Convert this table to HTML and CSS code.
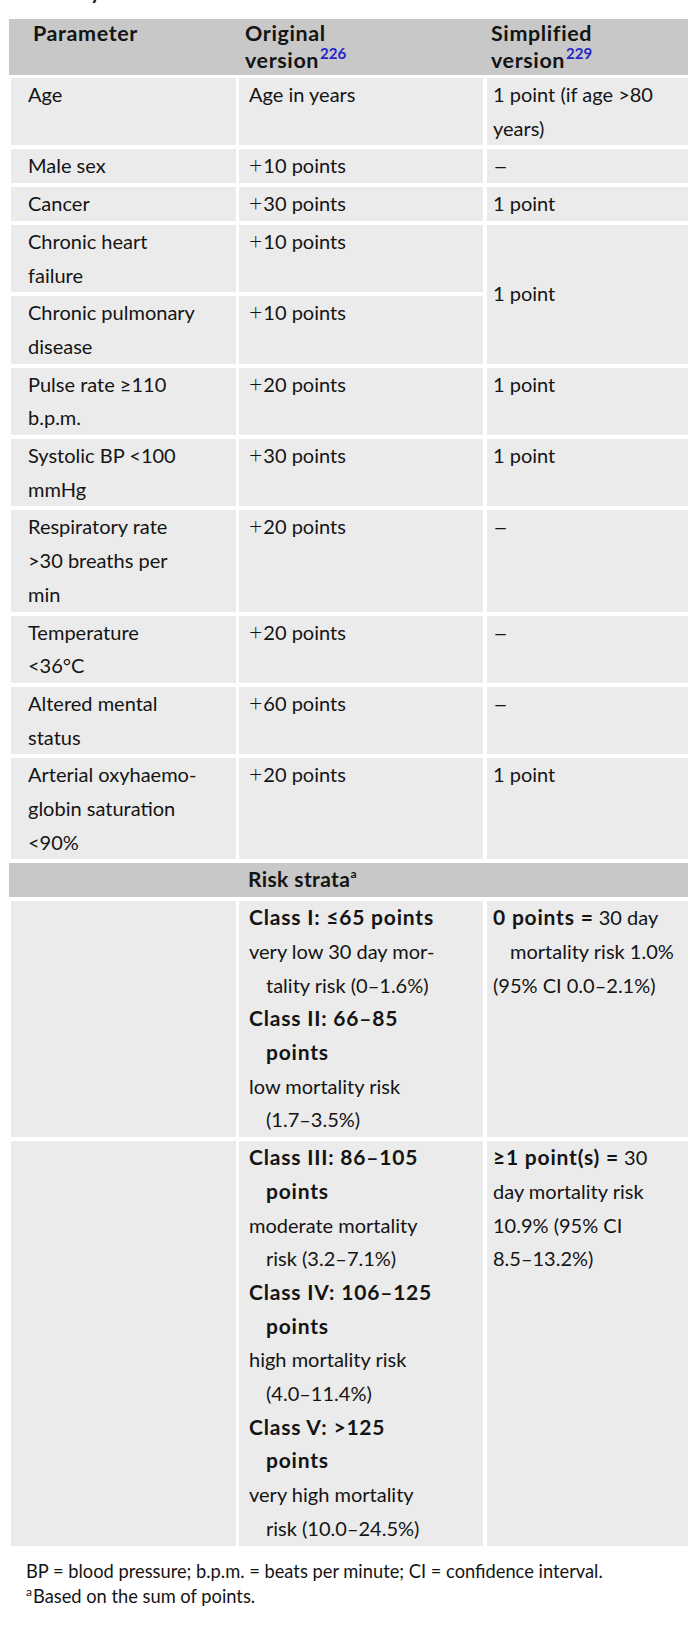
FILE: index.html
```html
<!DOCTYPE html>
<html lang="en">
<head>
<meta charset="utf-8">
<title>PESI</title>
<link rel="stylesheet" href="styles.css">
</head>
<body>
<div class="page">
  <div class="caption">Severity Index</div>
  <table class="pesi">
    <colgroup>
      <col class="w1"><col class="w2"><col class="w3">
    </colgroup>
    <thead>
      <tr>
        <th class="c1">Parameter</th>
        <th class="c2">Original<br>version<sup class="ref">226</sup></th>
        <th class="c3">Simplified<br>version<sup class="ref">229</sup></th>
      </tr>
    </thead>
    <tbody>
      <tr class="first">
        <td class="c1">Age</td>
        <td class="c2">Age in years</td>
        <td class="c3">1 point (if age &gt;80<br>years)</td>
      </tr>
      <tr>
        <td class="c1">Male sex</td>
        <td class="c2"><span class="op">+</span>10 points</td>
        <td class="c3"><span class="dash">–</span></td>
      </tr>
      <tr>
        <td class="c1">Cancer</td>
        <td class="c2"><span class="op">+</span>30 points</td>
        <td class="c3">1 point</td>
      </tr>
      <tr>
        <td class="c1">Chronic heart<br>failure</td>
        <td class="c2"><span class="op">+</span>10 points</td>
        <td class="c3 mid" rowspan="2">1 point</td>
      </tr>
      <tr>
        <td class="c1">Chronic pulmonary<br>disease</td>
        <td class="c2"><span class="op">+</span>10 points</td>
      </tr>
      <tr>
        <td class="c1">Pulse rate ≥110<br>b.p.m.</td>
        <td class="c2"><span class="op">+</span>20 points</td>
        <td class="c3">1 point</td>
      </tr>
      <tr>
        <td class="c1">Systolic BP &lt;100<br>mmHg</td>
        <td class="c2"><span class="op">+</span>30 points</td>
        <td class="c3">1 point</td>
      </tr>
      <tr>
        <td class="c1">Respiratory rate<br>&gt;30 breaths per<br>min</td>
        <td class="c2"><span class="op">+</span>20 points</td>
        <td class="c3"><span class="dash">–</span></td>
      </tr>
      <tr>
        <td class="c1">Temperature<br>&lt;36°C</td>
        <td class="c2"><span class="op">+</span>20 points</td>
        <td class="c3"><span class="dash">–</span></td>
      </tr>
      <tr>
        <td class="c1">Altered mental<br>status</td>
        <td class="c2"><span class="op">+</span>60 points</td>
        <td class="c3"><span class="dash">–</span></td>
      </tr>
      <tr>
        <td class="c1">Arterial oxyhaemo-<br>globin saturation<br>&lt;90%</td>
        <td class="c2"><span class="op">+</span>20 points</td>
        <td class="c3">1 point</td>
      </tr>
      <tr class="band">
        <td class="c1"></td>
        <td class="c2"><b>Risk strata</b><sup class="fn">a</sup></td>
        <td class="c3"></td>
      </tr>
      <tr>
        <td class="c1"></td>
        <td class="c2">
          <p class="hang"><b>Class I: ≤65 points</b></p>
          <p class="hang">very low 30 day mor-<br>tality risk (0–1.6%)</p>
          <p class="hang"><b>Class II: 66–85<br>points</b></p>
          <p class="hang">low mortality risk<br>(1.7–3.5%)</p>
        </td>
        <td class="c3">
          <p class="hang"><b>0 points =</b> 30 day<br>mortality risk 1.0%</p>
          <p>(95% CI 0.0–2.1%)</p>
        </td>
      </tr>
      <tr>
        <td class="c1"></td>
        <td class="c2">
          <p class="hang"><b>Class III: 86–105<br>points</b></p>
          <p class="hang">moderate mortality<br>risk (3.2–7.1%)</p>
          <p class="hang"><b>Class IV: 106–125<br>points</b></p>
          <p class="hang">high mortality risk<br>(4.0–11.4%)</p>
          <p class="hang"><b>Class V: &gt;125<br>points</b></p>
          <p class="hang">very high mortality<br>risk (10.0–24.5%)</p>
        </td>
        <td class="c3">
          <p><b>≥1 point(s) =</b> 30<br>day mortality risk<br>10.9% (95% CI<br>8.5–13.2%)</p>
        </td>
      </tr>
    </tbody>
  </table>
  <div class="notes">
    <p>BP = blood pressure; b.p.m. = beats per minute; CI = confidence interval.</p>
    <p><sup class="fn">a</sup>Based on the sum of points.</p>
  </div>
</div>
</body>
</html>
```
FILE: styles.css
```css
html, body {
  margin: 0;
  padding: 0;
  background: #ffffff;
  overflow: hidden;
}

body {
  font-family: Lato, "Liberation Sans", sans-serif;
  color: #141414;
}

.page {
  width: 720px;
  padding-left: 9px;
}

.caption {
  font-weight: 700;
  font-size: 20px;
  line-height: 24px;
  margin: -21px 0 16px 19px;
  white-space: nowrap;
}

.pesi {
  border-collapse: separate;
  border-spacing: 0;
  table-layout: fixed;
  width: 711px;
  font-size: 20px;
}

.w1 { width: 227px; }
.w2 { width: 247px; }
.w3 { width: 237px; }

.pesi th {
  background: #c8c8c8;
  font-weight: 700;
  font-size: 21.5px;
  letter-spacing: 0.6px;
  text-align: left;
  vertical-align: top;
  line-height: 27px;
  padding: 1px 0 1px;
  white-space: nowrap;
}

.pesi th.c1 { padding-left: 24px; }
.pesi th.c2 { padding-left: 9px; }
.pesi th.c3 { padding-left: 8px; }

.pesi td {
  background: #ebebeb;
  border-top: 4px solid #ffffff;
  line-height: 33.7px;
  padding: 0;
  vertical-align: top;
  white-space: nowrap;
}

.pesi tr.first td { border-top-width: 3px; }

.pesi td.c1 { border-left: 2px solid #ffffff; padding-left: 17px; }
.pesi td.c2 { border-left: 3px solid #ffffff; padding-left: 10px; }
.pesi td.c3 { border-left: 4px solid #ffffff; padding-left: 6px; }

.pesi td.mid { vertical-align: middle; }

.op {
  font-size: 23px;
  font-weight: 300;
  line-height: 20px;
  margin-right: 1px;
}

.dash {
  display: inline-block;
  transform: scaleX(1.3);
  transform-origin: left center;
}

.pesi b {
  font-size: 21px;
  letter-spacing: 0.8px;
  line-height: 20px;
}

.pesi tr.band td {
  background: #c8c8c8;
  border-left: 0;
}
.pesi tr.band td.c2 { padding-left: 12px; }
.pesi tr.band b { letter-spacing: 0.4px; }

.pesi p {
  margin: 0;
}

.pesi p.hang {
  padding-left: 17px;
  text-indent: -17px;
}

sup.ref {
  color: #2626c8;
  font-weight: 700;
  font-size: 15px;
  letter-spacing: 0;
  line-height: 0;
  vertical-align: 9px;
  margin-left: 1px;
}

sup.fn {
  font-size: 12px;
  line-height: 0;
  vertical-align: 9px;
  font-weight: 700;
}

.notes {
  margin: 13px 0 0 17px;
  font-size: 18.3px;
  line-height: 25.5px;
}

.notes p { margin: 0; }

.notes sup.fn {
  font-weight: 400;
  font-size: 12px;
  vertical-align: 7px;
  margin-right: 1px;
}
```
